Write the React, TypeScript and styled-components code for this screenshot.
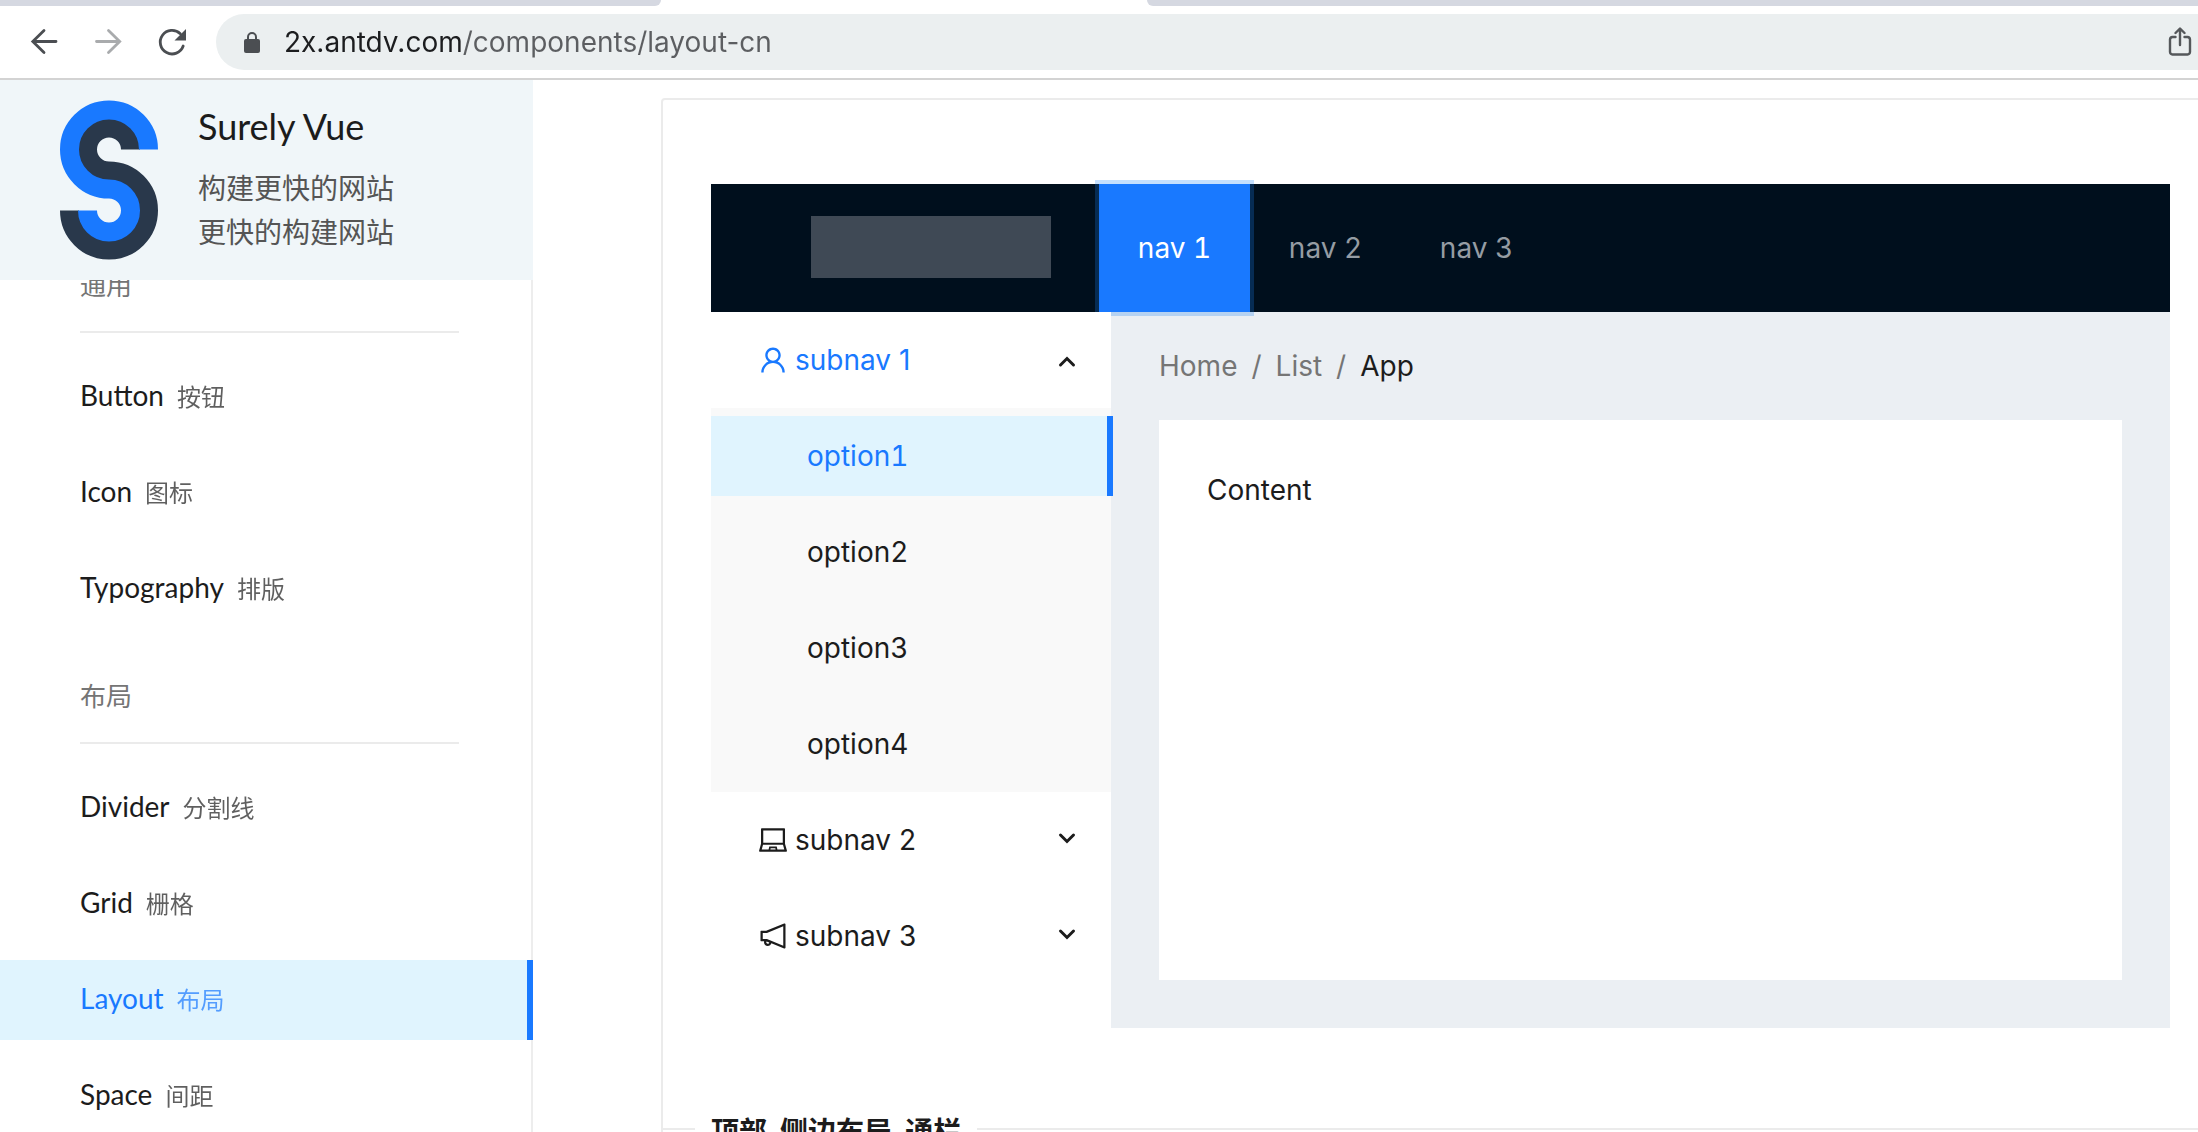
import React, { useState } from "react";
import styled, { createGlobalStyle } from "styled-components";
import {
  AiOutlineLaptop,
  AiOutlineNotification,
  AiOutlineUser,
} from "react-icons/ai";

const uiFont = `Inter, "Noto Sans CJK SC", sans-serif`;
const docFont = `Lato, "Noto Sans CJK SC", sans-serif`;

const GlobalStyle = createGlobalStyle`
  *, *::before, *::after { box-sizing: border-box; }
  body {
    margin: 0;
    background: #fff;
    color: #1c1c1c;
    font-family: ${uiFont};
    font-size: 28px;
    line-height: 44px;
  }
  ul, ol { margin: 0; padding: 0; list-style: none; }
  a { color: inherit; text-decoration: none; }
  button { border: 0; padding: 0; background: none; font: inherit; color: inherit; cursor: pointer; }
  h1, h2, p { margin: 0; font-weight: 400; }
`;

const Shell = styled.div`
  height: 100vh;
  display: flex;
  flex-direction: column;
  overflow: hidden;
`;

/* Browser chrome */

const TabStrip = styled.div`
  flex: none;
  display: flex;
  justify-content: space-between;
  height: 6px;
`;

const Tab = styled.div<{ $side: "left" | "right" }>`
  flex: ${(p) => (p.$side === "left" ? "0 0 661px" : "1 1 0")};
  margin-left: ${(p) => (p.$side === "left" ? 0 : 486)}px;
  background: #d5d8e1;
  border-radius: ${(p) => (p.$side === "left" ? "0 0 12px 0" : "0 0 0 12px")};
`;

const Toolbar = styled.div`
  flex: none;
  display: flex;
  align-items: center;
  height: 74px;
  padding-left: 24px;
  border-bottom: 2px solid #d3d3d3;
`;

const ToolButton = styled.button`
  display: flex;
  width: 40px;
  height: 40px;
  margin-right: 24px;
  color: #4b4e52;
  &:disabled { color: #a9abad; }
`;

const AddressBar = styled.label`
  flex: 1;
  display: flex;
  align-items: center;
  height: 56px;
  padding: 0 6px 0 24px;
  border-radius: 28px 0 0 28px;
  background: #ebeff0;
  color: #4b4e52;
`;

const AddressInput = styled.input`
  flex: 1;
  min-width: 0;
  height: 44px;
  margin-left: 18px;
  padding: 0;
  border: 0;
  outline: 0;
  font: inherit;
  color: transparent;
  background: linear-gradient(90deg, #1c1d1f 178px, #5c5e61 178px);
  -webkit-background-clip: text;
  background-clip: text;
`;

const ShareButton = styled.button`
  display: flex;
  width: 24px;
  height: 30px;
`;

/* Documentation page */

const Page = styled.div`
  flex: 1;
  display: flex;
  min-height: 0;
`;

const Sidebar = styled.aside`
  flex: none;
  display: flex;
  flex-direction: column;
  width: 533px;
  font-family: ${docFont};
`;

const Sponsor = styled.a`
  flex: none;
  display: flex;
  gap: 40px;
  height: 200px;
  padding: 20px 60px;
  background: #f0f6f9;
`;

const SponsorText = styled.div`
  display: flex;
  flex-direction: column;
  padding-top: 4px;
`;

const SponsorName = styled.span`
  margin-bottom: 18px;
  font-size: 36px;
`;

const SponsorLine = styled.span`
  color: #555;
`;

const SidebarScroll = styled.nav`
  flex: 1;
  min-height: 0;
  border-right: 2px solid #ededed;
  clip-path: inset(0);
`;

/* The list is shown part-way scrolled under the sponsor block. */
const DocMenu = styled.div`
  display: flow-root;
  margin-top: -62px;
`;

const GroupTitle = styled.h2`
  margin: 21px 72px 24px 80px;
  border-bottom: 2px solid #ebebeb;
  color: #757575;
  font-size: 26px;
  line-height: 92px;
`;

const DocList = styled.ul`
  display: flex;
  flex-direction: column;
  gap: 16px;
`;

const DocLink = styled.a<{ $active: boolean }>`
  position: relative;
  display: flex;
  align-items: baseline;
  gap: 13px;
  height: 80px;
  padding-left: 80px;
  line-height: 76px;
  color: ${(p) => (p.$active ? "#1979ff" : "inherit")};
  background: ${(p) => (p.$active ? "#e0f4fe" : "transparent")};
  &::after {
    content: "";
    display: ${(p) => (p.$active ? "block" : "none")};
    position: absolute;
    inset: 0 -2px 0 auto;
    width: 6px;
    background: #1979ff;
  }
`;

const DocSub = styled.span`
  font-size: 24px;
  opacity: 0.7;
`;

const Main = styled.main`
  flex: 1;
  min-width: 0;
  padding: 18px 0 0 128px;
`;

/* The demo column runs past the right edge of the window. */
const DemoBox = styled.section`
  margin-right: -22px;
  padding: 84px 48px 79px;
  border: 2px solid #ebebeb;
  border-bottom: 0;
  border-radius: 4px 4px 0 0;
`;

const DemoFooter = styled.div`
  display: flex;
  align-items: center;
  height: 44px;
  margin-right: -22px;
  border-left: 2px solid #ebebeb;
  &::before, &::after {
    content: "";
    flex: 0 0 32px;
    height: 2px;
    background: #ebebeb;
  }
  &::after { flex: 1; }
`;

const DemoTitle = styled.a`
  padding: 6px 16px 0;
  font-weight: 700;
  line-height: 38px;
`;

const Header = styled.header`
  display: flex;
  height: 128px;
  padding: 0 100px;
  background: #000f1d;
`;

const HeaderLogo = styled.div`
  width: 240px;
  height: 62px;
  margin: 32px 48px 0 0;
  background: #3f4955;
`;

const TopMenu = styled.ul`
  display: flex;
`;

const TopItem = styled.button<{ $active: boolean }>`
  width: 151px;
  height: 128px;
  font-variant-numeric: tabular-nums;
  white-space: nowrap;
  color: ${(p) => (p.$active ? "#fff" : "#959ca3")};
  background: ${(p) => (p.$active ? "#1979ff" : "transparent")};
  box-shadow: ${(p) => (p.$active ? "0 0 0 4px rgba(24, 130, 250, 0.25)" : "none")};
`;

const Body = styled.div`
  display: flex;
`;

const Sider = styled.aside`
  position: relative;
  flex: none;
  width: 400px;
  background: #fff;
`;

const SubMenu = styled.div`
  display: flow-root;
`;

const SubTitle = styled.button<{ $open: boolean }>`
  display: flex;
  align-items: center;
  gap: 6px;
  width: 100%;
  height: 80px;
  margin: 8px 0;
  padding: 0 32px 0 46px;
  color: ${(p) => (p.$open ? "#1979ff" : "inherit")};
`;

const SubLabel = styled.span`
  flex: 1;
  text-align: left;
`;

const Chevron = styled.svg<{ $open: boolean }>`
  width: 24px;
  height: 24px;
  color: #1c1c1c;
  transform: ${(p) => (p.$open ? "none" : "rotate(180deg)")};
`;

const OptionList = styled.ul`
  display: flex;
  flex-direction: column;
  gap: 16px;
  padding: 8px 0;
  background: #f9f9f9;
`;

const Option = styled.button<{ $active: boolean }>`
  position: relative;
  display: block;
  width: 100%;
  height: 80px;
  padding-left: 96px;
  font-variant-numeric: tabular-nums;
  text-align: left;
  color: ${(p) => (p.$active ? "#1979ff" : "inherit")};
  background: ${(p) => (p.$active ? "#e0f4fe" : "transparent")};
  &::after {
    content: "";
    display: ${(p) => (p.$active ? "block" : "none")};
    position: absolute;
    inset: 0 -2px 0 auto;
    width: 6px;
    background: #1979ff;
  }
`;

const ContentArea = styled.div`
  flex: 1;
  padding: 32px 48px 48px;
  background: rgba(0, 50, 100, 0.08);
`;

const Crumbs = styled.ol`
  display: flex;
  margin-bottom: 32px;
  color: #757575;
`;

const Crumb = styled.li`
  &:last-child { color: #1c1c1c; }
  &:not(:last-child)::after {
    content: "/";
    margin: 0 14px;
  }
`;

const Card = styled.div`
  min-height: 560px;
  padding: 48px;
  background: #fff;
`;

const SurelyLogo = () => (
  <svg width="98" height="160" viewBox="0 0 98 160" fill="none" strokeWidth="19" aria-hidden="true">
    <path d="M70.5 49.5A21.5 21.5 0 1 0 49 71A39.5 39.5 0 1 1 9.5 110.5" stroke="#29384b" />
    <path d="M88.5 49.5A39.5 39.5 0 1 0 49 89A21.5 21.5 0 1 1 27.5 110.5" stroke="#1979ff" />
  </svg>
);

const ToolIcon = styled.svg.attrs({
  width: 40,
  height: 40,
  viewBox: "0 0 40 40",
  fill: "none",
  stroke: "currentColor",
  strokeWidth: 2.8,
  strokeLinecap: "round",
  "aria-hidden": true,
})``;

const BackIcon = () => (
  <ToolIcon>
    <path d="M9.500 19.500H32M20 8.500L8.800 19.500L20 30.500" />
  </ToolIcon>
);

const ForwardIcon = () => (
  <ToolIcon>
    <path d="M8.500 19.500H31M20.500 8.500L31.700 19.500L20.500 30.500" />
  </ToolIcon>
);

const ReloadIcon = () => (
  <ToolIcon>
    <path d="M28.300 11.700A11.800 11.800 0 1 0 31.200 24" />
    <path d="M34 7V18.500H22.500Z" fill="currentColor" stroke="none" />
  </ToolIcon>
);

const LockIcon = () => (
  <svg width="26" height="26" viewBox="0 0 26 26" fill="none" aria-hidden="true">
    <rect x="4" y="10" width="16" height="14" rx="2" fill="currentColor" />
    <path d="M8 11V8A4 4 0 0 1 16 8V11" stroke="currentColor" strokeWidth="2" />
  </svg>
);

const ShareIcon = () => (
  <svg width="24" height="30" viewBox="0 0 24 30" fill="none" stroke="#55585b" strokeWidth="2.4" strokeLinecap="round" strokeLinejoin="round" aria-hidden="true">
    <path d="M7.500 10H4.500A2.700 2.700 0 0 0 2 12.500V25A2.700 2.700 0 0 0 4.500 27.500H19.500A2.700 2.700 0 0 0 22 25V12.500A2.700 2.700 0 0 0 19.500 10H16.500" />
    <path d="M12 18V2M7.500 6L12 1.500L16.500 6" />
  </svg>
);

const ArrowIcon = ({ open }: { open: boolean }) => (
  <Chevron $open={open} viewBox="0 0 24 24" fill="none" stroke="currentColor" strokeWidth="3" strokeLinecap="round" aria-hidden="true">
    <path d="M5.500 17L12 10.500L18.500 17" />
  </Chevron>
);

const groups = [
  { title: "通用", items: [["Button", "按钮"], ["Icon", "图标"], ["Typography", "排版"]] },
  { title: "布局", items: [["Divider", "分割线"], ["Grid", "栅格"], ["Layout", "布局"], ["Space", "间距"]] },
];

const subnavs = [
  { label: "subnav 1", Icon: AiOutlineUser, options: ["option1", "option2", "option3", "option4"] },
  { label: "subnav 2", Icon: AiOutlineLaptop, options: ["option5", "option6", "option7", "option8"] },
  { label: "subnav 3", Icon: AiOutlineNotification, options: ["option9", "option10", "option11", "option12"] },
];

function LayoutDemo() {
  const [nav, setNav] = useState("nav 1");
  const [opened, setOpened] = useState<string | null>("subnav 1");
  const [option, setOption] = useState("option1");

  return (
    <div>
      <Header>
        <HeaderLogo />
        <TopMenu>
          {["nav 1", "nav 2", "nav 3"].map((name) => (
            <li key={name}>
              <TopItem $active={nav === name} onClick={() => setNav(name)}>{name}</TopItem>
            </li>
          ))}
        </TopMenu>
      </Header>
      <Body>
        <Sider>
          {subnavs.map(({ label, Icon, options }) => {
            const open = opened === label;
            return (
              <SubMenu key={label}>
                <SubTitle $open={open} aria-expanded={open} onClick={() => setOpened(open ? null : label)}>
                  <Icon size={32} />
                  <SubLabel>{label}</SubLabel>
                  <ArrowIcon open={open} />
                </SubTitle>
                {open && (
                  <OptionList>
                    {options.map((name) => (
                      <li key={name}>
                        <Option $active={option === name} onClick={() => setOption(name)}>{name}</Option>
                      </li>
                    ))}
                  </OptionList>
                )}
              </SubMenu>
            );
          })}
        </Sider>
        <ContentArea>
          <Crumbs>
            <Crumb>Home</Crumb>
            <Crumb>List</Crumb>
            <Crumb>App</Crumb>
          </Crumbs>
          <Card>Content</Card>
        </ContentArea>
      </Body>
    </div>
  );
}

export default function App() {
  return (
    <Shell>
      <GlobalStyle />
      <TabStrip>
        <Tab $side="left" />
        <Tab $side="right" />
      </TabStrip>
      <Toolbar>
        <ToolButton aria-label="Back"><BackIcon /></ToolButton>
        <ToolButton aria-label="Forward" disabled><ForwardIcon /></ToolButton>
        <ToolButton aria-label="Reload"><ReloadIcon /></ToolButton>
        <AddressBar>
          <LockIcon />
          <AddressInput aria-label="Address" defaultValue="2x.antdv.com/components/layout-cn" />
          <ShareButton aria-label="Share"><ShareIcon /></ShareButton>
        </AddressBar>
      </Toolbar>
      <Page>
        <Sidebar>
          <Sponsor href="#surely">
            <SurelyLogo />
            <SponsorText>
              <SponsorName>Surely Vue</SponsorName>
              <SponsorLine>构建更快的网站</SponsorLine>
              <SponsorLine>更快的构建网站</SponsorLine>
            </SponsorText>
          </Sponsor>
          <SidebarScroll>
            <DocMenu>
              {groups.map((group) => (
                <section key={group.title}>
                  <GroupTitle>{group.title}</GroupTitle>
                  <DocList>
                    {group.items.map(([name, sub]) => (
                      <li key={name}>
                        <DocLink href={`#${name}`} $active={name === "Layout"}>
                          {name}
                          <DocSub>{sub}</DocSub>
                        </DocLink>
                      </li>
                    ))}
                  </DocList>
                </section>
              ))}
            </DocMenu>
          </SidebarScroll>
        </Sidebar>
        <Main>
          <DemoBox>
            <LayoutDemo />
          </DemoBox>
          <DemoFooter>
            <DemoTitle href="#top-side">顶部-侧边布局-通栏</DemoTitle>
          </DemoFooter>
        </Main>
      </Page>
    </Shell>
  );
}
